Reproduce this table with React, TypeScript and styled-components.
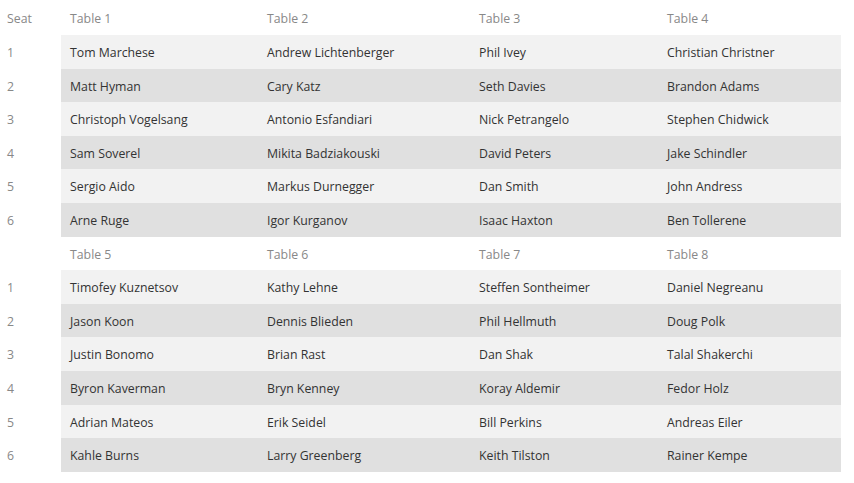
import { Fragment } from 'react';
import styled, { createGlobalStyle } from 'styled-components';

const GlobalStyle = createGlobalStyle`
  body {
    margin: 0;
    background: #fff;
    font-family: "Open Sans", "Liberation Sans", sans-serif;
  }
`;

const Wrapper = styled.div`
  padding: 1.4px 0 0 0;
  width: 854px;
`;

const Grid = styled.table`
  width: 841px;
  border-collapse: collapse;
  table-layout: fixed;
  font-size: 12.3px;
  line-height: 20.8px;

  td {
    box-sizing: border-box;
    padding-top: 8px;
    padding-bottom: 4.8px;
    vertical-align: middle;
    white-space: nowrap;
  }
`;

const Col = styled.col<{ $w: number }>`
  width: ${p => p.$w}px;
`;

const Row = styled.tr<{ $shade?: 'light' | 'dark' }>`
  td:not(:first-child) {
    background: ${p => (p.$shade === 'light' ? '#f2f2f2' : p.$shade === 'dark' ? '#e0e0e0' : 'transparent')};
  }
`;

const HeadCell = styled.td<{ $seat?: boolean }>`
  padding-left: ${p => (p.$seat ? 7 : 9)}px;
  color: #888;
`;

const SeatCell = styled.td`
  padding-left: 7px;
  color: #888;
`;

const NameCell = styled.td`
  padding-left: 9px;
  color: #333;
`;

const widths = [61, 197, 212, 188, 183];

const sections = [
  {
    tables: ['Table 1', 'Table 2', 'Table 3', 'Table 4'],
    seats: [
      ['Tom Marchese', 'Andrew Lichtenberger', 'Phil Ivey', 'Christian Christner'],
      ['Matt Hyman', 'Cary Katz', 'Seth Davies', 'Brandon Adams'],
      ['Christoph Vogelsang', 'Antonio Esfandiari', 'Nick Petrangelo', 'Stephen Chidwick'],
      ['Sam Soverel', 'Mikita Badziakouski', 'David Peters', 'Jake Schindler'],
      ['Sergio Aido', 'Markus Durnegger', 'Dan Smith', 'John Andress'],
      ['Arne Ruge', 'Igor Kurganov', 'Isaac Haxton', 'Ben Tollerene'],
    ],
  },
  {
    tables: ['Table 5', 'Table 6', 'Table 7', 'Table 8'],
    seats: [
      ['Timofey Kuznetsov', 'Kathy Lehne', 'Steffen Sontheimer', 'Daniel Negreanu'],
      ['Jason Koon', 'Dennis Blieden', 'Phil Hellmuth', 'Doug Polk'],
      ['Justin Bonomo', 'Brian Rast', 'Dan Shak', 'Talal Shakerchi'],
      ['Byron Kaverman', 'Bryn Kenney', 'Koray Aldemir', 'Fedor Holz'],
      ['Adrian Mateos', 'Erik Seidel', 'Bill Perkins', 'Andreas Eiler'],
      ['Kahle Burns', 'Larry Greenberg', 'Keith Tilston', 'Rainer Kempe'],
    ],
  },
];

export default function App() {
  return (
    <>
      <GlobalStyle />
      <Wrapper>
        <Grid>
          <colgroup>
            {widths.map((w, i) => (
              <Col key={i} $w={w} />
            ))}
          </colgroup>
          <tbody>
            {sections.map((section, si) => (
              <Fragment key={si}>
                <Row>
                  <HeadCell $seat>{si === 0 ? 'Seat' : ''}</HeadCell>
                  {section.tables.map(t => (
                    <HeadCell key={t}>{t}</HeadCell>
                  ))}
                </Row>
                {section.seats.map((names, ri) => (
                  <Row key={ri} $shade={ri % 2 === 0 ? 'light' : 'dark'}>
                    <SeatCell>{ri + 1}</SeatCell>
                    {names.map(n => (
                      <NameCell key={n}>{n}</NameCell>
                    ))}
                  </Row>
                ))}
              </Fragment>
            ))}
          </tbody>
        </Grid>
      </Wrapper>
    </>
  );
}
